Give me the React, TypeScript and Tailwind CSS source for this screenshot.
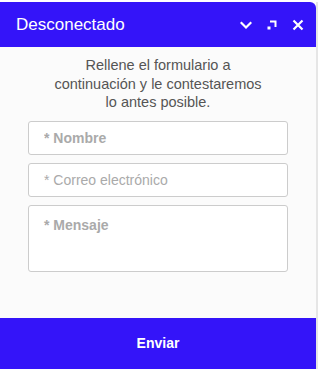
import { useState } from 'react';

/**
 * Offline chat widget: contact form shown when no agent is connected.
 */
export default function App() {
  const [name, setName] = useState('');
  const [email, setEmail] = useState('');
  const [message, setMessage] = useState('');

  return (
    <div className="w-[318px] h-[369px] bg-white pt-[2px] font-['Liberation_Sans',Arial,sans-serif] overflow-hidden">
      <div className="flex h-[367px] w-[318px]">
        <div className="flex flex-col w-[316px] h-full bg-[#fbfbfb] rounded-tr-[6px] overflow-hidden">
          {/* Header */}
          <div className="flex items-center h-[45px] shrink-0 bg-[#3414f9] pl-4 pr-[12px]">
            <span className="flex-1 text-white text-[17px] leading-none">Desconectado</span>
            <div className="flex items-center gap-[14px]">
              <svg width="12" height="12" viewBox="0 0 12 12" fill="none">
                <path d="M1.5 4 L6 8.5 L10.5 4" stroke="white" strokeWidth="2.2" strokeLinecap="square" />
              </svg>
              <svg width="12" height="12" viewBox="0 0 12 12" fill="white">
                <rect x="1.5" y="7.5" width="3" height="3" />
                <path d="M4 1.5 H10.5 V8 H8.5 V3.5 H4 Z" />
              </svg>
              <svg width="12" height="12" viewBox="0 0 12 12" fill="none">
                <path d="M1.5 1.5 L10.5 10.5 M10.5 1.5 L1.5 10.5" stroke="white" strokeWidth="2.2" />
              </svg>
            </div>
          </div>

          {/* Body */}
          <div className="flex-1 flex flex-col items-center pt-[9px]">
            <p className="text-center text-[14.5px] leading-[18.5px] text-[#555555] w-[214px]">
              Rellene el formulario a continuación y le contestaremos lo antes posible.
            </p>
            <form className="flex flex-col gap-2 w-[260px] mt-[9px]">
              <input
                value={name}
                onChange={e => setName(e.target.value)}
                placeholder="* Nombre"
                className="h-[34px] w-full bg-white border border-[#cccccc] rounded-[3px] px-[15px] text-[14px] font-bold text-[#555] placeholder:text-[#aaaaaa] outline-none"
              />
              <input
                value={email}
                onChange={e => setEmail(e.target.value)}
                placeholder="* Correo electrónico"
                className="h-[34px] w-full bg-white border border-[#cccccc] rounded-[3px] px-[15px] text-[14px] text-[#555] placeholder:text-[#aaaaaa] outline-none"
              />
              <textarea
                value={message}
                onChange={e => setMessage(e.target.value)}
                placeholder="* Mensaje"
                className="h-[67px] w-full bg-white border border-[#cccccc] rounded-[3px] px-[15px] pt-[12px] text-[14px] font-bold leading-none text-[#555] placeholder:text-[#aaaaaa] outline-none resize-none"
              />
            </form>
          </div>

          {/* Submit */}
          <button className="h-[51px] shrink-0 w-full bg-[#3414f9] text-white text-[14px] font-bold">
            Enviar
          </button>
        </div>
        <div className="w-[2px] h-full bg-[#e6e6e6]" />
      </div>
    </div>
  );
}
